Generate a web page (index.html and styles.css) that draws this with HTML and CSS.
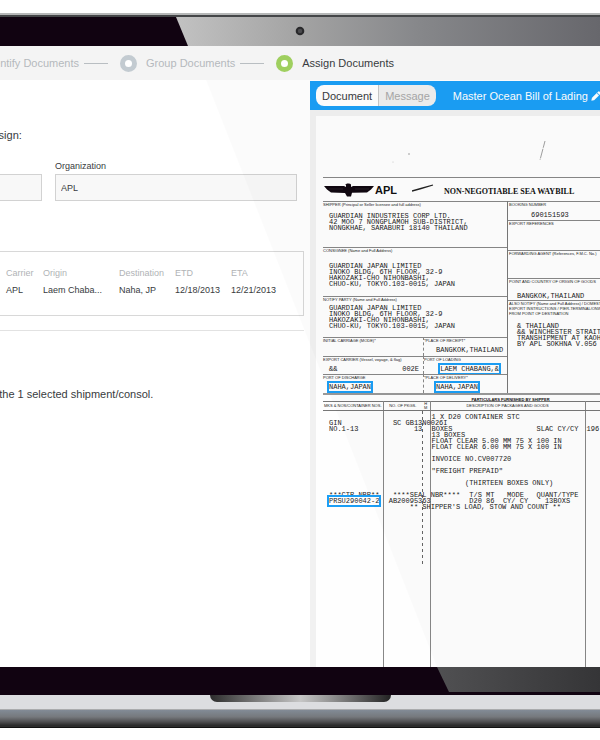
FILE: index.html
```html
<!DOCTYPE html>
<html lang="en">
<head>
<meta charset="utf-8">
<title>Assign Documents</title>
<link rel="stylesheet" href="styles.css">
</head>
<body>
<div class="laptop">
  <div class="bezel bezel-top">
    <svg class="camera" viewBox="0 0 10 10" aria-hidden="true"><circle cx="5" cy="5" r="4.3" fill="#29292b"/><circle cx="5" cy="5" r="2.2" fill="#4b4b4e"/></svg>
  </div>
  <main class="screen">
    <ol class="stepper">
      <li><span>Identify Documents</span></li>
      <li><i class="rule"></i><i class="ring"></i><span>Group Documents</span></li>
      <li class="current"><i class="rule"></i><i class="ring"></i><span>Assign Documents</span></li>
    </ol>
    <div class="workspace">
      <section class="assign">
        <p class="lead">assign:</p>
        <form class="filters">
          <div class="field"><input type="text" aria-label="Reference"></div>
          <div class="field"><label for="org">Organization</label><input id="org" type="text" value="APL"></div>
        </form>
        <div class="card">
          <table class="shipments">
            <colgroup><col class="c-carrier"><col class="c-origin"><col class="c-dest"><col class="c-etd"><col></colgroup>
            <thead><tr><th>Carrier</th><th>Origin</th><th>Destination</th><th>ETD</th><th>ETA</th></tr></thead>
            <tbody><tr><td>APL</td><td>Laem Chaba...</td><td>Naha, JP</td><td>12/18/2013</td><td>12/21/2013</td></tr></tbody>
          </table>
        </div>
        <hr>
        <p class="summary">to the 1 selected shipment/consol.</p>
      </section>
      <section class="viewer">
        <header class="viewer-bar">
          <div class="segmented"><button type="button" class="active">Document</button><button type="button">Message</button></div>
          <h1>Master Ocean Bill of Lading</h1>
          <button type="button" class="edit" aria-label="Edit"><svg viewBox="0 0 10 10" aria-hidden="true"><path d="M0.6 9.4 1.2 6.8 5.7 2.3 7.8 4.4 3.2 8.9ZM6.4 1.6 7.3 .7Q7.9.2 8.5.8L9.3 1.6Q9.8 2.2 9.3 2.8L8.4 3.7Z" fill="#fff" stroke="#fff" stroke-width=".4"/></svg></button>
        </header>
        <div class="viewer-body">
          <article class="scan">
            <div class="margin-top">
              <svg viewBox="0 0 284 61" aria-hidden="true"><path d="M229 25 224 44" stroke="#888" stroke-width=".8" stroke-dasharray="7 1 10 1"/><circle cx="93" cy="38" r=".8" fill="#999"/><circle cx="77" cy="46" r=".5" fill="#bbb"/></svg>
            </div>
            <header class="letterhead">
              <svg class="eagle" viewBox="0 0 52 14" aria-hidden="true"><path d="M1 3H21L23 4V2L22 2 24 .6Q27 0 28 1.5V4L30 3H51L48 6.5 44 9.6 29 9.8 28 13.5H24L22 10 8 9.6 4 6.5Z" fill="#110811"/><path d="M6 6H20M32 6H46" stroke="#3c343c" stroke-width=".5"/></svg>
              <strong>APL</strong>
              <svg class="dash" viewBox="0 0 22 8" aria-hidden="true"><path d="M0 7 9 4.5 21 1" stroke="#222" fill="none" stroke-width="1.3"/></svg>
              <h2>NON-NEGOTIABLE SEA WAYBILL</h2>
            </header>
            <div class="parties">
              <div class="left">
                <section class="box shipper"><h3>SHIPPER (Principal or Seller licensee and full address)</h3><pre>GUARDIAN INDUSTRIES CORP LTD.
42 MOO 7 NONGPLAMOH SUB-DISTRICT,
NONGKHAE, SARABURI 18140 THAILAND</pre></section>
                <section class="box consignee"><h3>CONSIGNEE (Name and Full Address)</h3><pre>GUARDIAN JAPAN LIMITED
INOKO BLDG, 6TH FLOOR, 32-9
HAKOZAKI-CHO NIHONBASHI,
CHUO-KU, TOKYO.103-0015, JAPAN</pre></section>
                <section class="box notify"><h3>NOTIFY PARTY (Name and Full Address)</h3><pre>GUARDIAN JAPAN LIMITED
INOKO BLDG, 6TH FLOOR, 32-9
HAKOZAKI-CHO NIHONBASHI,
CHUO-KU, TOKYO.103-0015, JAPAN</pre></section>
                <div class="pair"><section class="box"><h3>INITIAL CARRIAGE (MODE)*</h3></section><section class="box"><h3>*PLACE OF RECEIPT*</h3><pre>BANGKOK,THAILAND</pre></section></div>
                <div class="pair"><section class="box"><h3>EXPORT CARRIER (Vessel, voyage, &amp; flag)</h3><pre class="split"><span>&amp;&amp;</span><span>002E</span></pre></section><section class="box"><h3>PORT OF LOADING</h3><pre> <mark>LAEM CHABANG,&amp;</mark></pre></section></div>
                <div class="pair"><section class="box"><h3>PORT OF DISCHARGE</h3><pre><mark>NAHA,JAPAN</mark></pre></section><section class="box"><h3>*PLACE OF DELIVERY*</h3><pre><mark>NAHA,JAPAN</mark></pre></section></div>
              </div>
              <div class="right">
                <section class="box booking"><h3>BOOKING NUMBER</h3><pre>690151593</pre></section>
                <section class="box"><h3>EXPORT REFERENCES</h3></section>
                <section class="box"><h3>FORWARDING AGENT (References, F.M.C. No.)</h3></section>
                <section class="box origin"><h3>POINT AND COUNTRY OF ORIGIN OF GOODS</h3><pre>BANGKOK,THAILAND</pre></section>
                <section class="box also"><h3>ALSO NOTIFY (Name and Full Address) / DOMESTIC<br>EXPORT INSTRUCTIONS / PIER-TERMINAL/ONWARD<br>FROM POINT OF DESTINATION</h3><pre>&amp; THAILAND
&amp;&amp; WINCHESTER STRAIT
TRANSHIPMENT AT KAOHSIUNG
BY APL SOKHNA V.056</pre></section>
              </div>
            </div>
            <table class="particulars">
              <caption>PARTICULARS FURNISHED BY SHIPPER</caption>
              <colgroup><col class="p-marks"><col class="p-pkgs"><col class="p-hm"><col class="p-desc"><col></colgroup>
              <thead><tr><th>MKS &amp; NOS/CONTAINER NOS.</th><th>NO. OF PKGS.</th><th>H<br>M</th><th>DESCRIPTION OF PACKAGES AND GOODS</th><th></th></tr></thead>
              <tbody><tr>
                <td><pre class="inset">

GIN
NO.1-13










***CTR NBR**
<mark>PRSU290042-2</mark></pre></td>
                <td><pre>

  SC GB13N0026I
       13










  ****SEAL NBR****
 AB20095363
      ** SHIPPER'S LOAD, STOW AND COUNT **</pre></td>
                <td class="perforated"></td>
                <td><pre>
1 X D20 CONTAINER STC

BOXES                    SLAC CY/CY
13 BOXES
FLOAT CLEAR 5.00 MM 75 X 100 IN
FLOAT CLEAR 6.00 MM 75 X 100 IN

INVOICE NO.CV007720

"FREIGHT PREPAID"

        (THIRTEEN BOXES ONLY)

         T/S MT   MODE   QUANT/TYPE
         D20 86  CY/ CY    13BOXS</pre></td>
                <td><pre>


196</pre></td>
              </tr></tbody>
            </table>
          </article>
        </div>
      </section>
      <div class="glare"></div>
    </div>
  </main>
  <div class="bezel bezel-bottom"></div>
  <div class="base"><div class="notch"></div></div>
  <div class="underside"></div>
</div>
</body>
</html>
```
FILE: styles.css
```css
* { box-sizing: border-box; }
body {
  margin: 0;
  background: #fff;
  color: #383b40;
  font-family: "Liberation Sans", sans-serif;
  font-size: 11px;
  line-height: 16px;
}
h1, h2, h3, p, pre, ol { margin: 0; padding: 0; font-weight: normal; }
button, input { font: inherit; color: inherit; }
.laptop { padding-top: 13px; overflow: hidden; }

.bezel { position: relative; background: #110311; }
.bezel-top {
  height: 33px;
  border-top: 2px solid #b6b8b8;
  box-shadow: inset 0 2px #444648;
  display: flex;
  justify-content: center;
  align-items: center;
}
.bezel-top::before {
  content: "";
  position: absolute;
  inset: 2px 0 0;
  background: linear-gradient(90deg, #c2c2c2 176px, #a3a3a3 300px, #86878a 420px, #67676c 600px);
  clip-path: polygon(176px 0, 100% 0, 100% 100%, 188px 100%);
}
.camera { position: relative; width: 10px; height: 10px; }
.bezel-bottom { height: 28px; }
.bezel-bottom::before {
  content: "";
  position: absolute;
  inset: 0 0 3px;
  background: linear-gradient(90deg, #505052 437px, #353537 600px);
  clip-path: polygon(437px 0, 100% 0, 100% 100%, 449px 100%);
}
.base {
  height: 15px;
  background: #dcdde0;
  border-bottom: 1px solid #aaabad;
}
.notch {
  width: 181px;
  height: 7px;
  margin: 0 auto;
  border-radius: 0 0 7px 7px;
  background: linear-gradient(90deg, #2c2c2c, #999 35%, #c6c6c6 50%, #999 65%, #222);
}
.underside {
  height: 18px;
  background: linear-gradient(#828b96, #76797d 40%, #4e4e50 70%, #2c2c2c 90%);
  border-bottom: 1px solid #111;
}

.stepper {
  display: flex;
  align-items: center;
  justify-content: flex-end;
  height: 34px;
  padding-right: 206px;
  margin-left: -30px;
  background: #f4f4f4;
  color: #b4b9bd;
  list-style: none;
  white-space: nowrap;
}
.stepper li { display: flex; align-items: center; }
.stepper .current { color: #383b40; }
.rule { width: 24px; height: 1px; margin: 0 12px 0 5px; background: #b9bec2; }
.ring {
  width: 17px;
  height: 17px;
  margin-right: 9px;
  border: 5px solid #c3cbd1;
  border-radius: 50%;
  background: #fff;
}
.current .ring { border-color: #9fcf5f; }

.workspace {
  position: relative;
  display: grid;
  grid-template-columns: 31fr 29fr;
  height: 587px;
}
.assign { min-width: 0; margin-left: -10px; padding: 47px 6px 0 0; }
.lead, .summary { margin-left: -3px; white-space: nowrap; }
.filters { display: flex; align-items: flex-end; gap: 13px; padding: 15px 7px 0 0; font-size: 9px; }
.field { flex: 1; }
.field:first-child { flex: 0 0 52px; }
.field label { display: block; }
.field input {
  display: block;
  width: 100%;
  height: 27px;
  padding: 0 5px;
  border: 1px solid #d2d2d2;
  background: #f8f8f8;
}
.card {
  height: 65px;
  margin-top: 50px;
  padding: 13px 0 0 15px;
  border: 1px solid #d8d8d8;
  font-size: 9px;
}
.shipments { width: 100%; border-collapse: collapse; table-layout: fixed; line-height: 17px; white-space: nowrap; }
.shipments th { padding: 0; color: #b0b3b6; font-weight: normal; text-align: left; }
.shipments td { padding: 0; }
.c-carrier { width: 37px; }
.c-origin { width: 76px; }
.c-dest, .c-etd { width: 56px; }
hr { height: 1px; margin: 14px 0 0; border: 0; background: #e2e2e2; }
.summary { margin-top: 55px; }

.viewer { display: flex; flex-direction: column; min-width: 0; overflow: hidden; }
.viewer-bar {
  display: flex;
  align-items: center;
  flex: none;
  height: 29px;
  margin-top: 1px;
  padding-left: 6px;
  background: #1b9ff6;
  color: #fff;
  white-space: nowrap;
}
.viewer-bar h1 { margin-left: 17px; font-size: 11px; }
.segmented { display: flex; flex: none; overflow: hidden; border-radius: 8px; }
.segmented button { height: 21px; padding: 0 6px; border: 0; background: #efefef; color: #a8a8a8; }
.segmented .active { border-right: 1px solid #c8c8c8; background: #fff; color: #383b40; }
.edit { display: flex; margin-left: 3px; padding: 0; border: 0; background: none; }
.edit svg { width: 10px; height: 10px; }
.viewer-body { flex: 1; min-height: 0; padding: 6px 0 0 6px; overflow: hidden; background: #f1f1f1; }

.scan { width: 340px; height: 100%; padding-left: 7px; background: #fefefe; color: #222; }
.margin-top { height: 61px; margin-left: -7px; }
.margin-top svg { width: 284px; height: 61px; }
.letterhead { display: flex; align-items: center; height: 24px; border-top: 1px solid #888; color: #111; white-space: nowrap; }
.eagle { width: 52px; height: 14px; }
.letterhead strong { font: bold 11px/14px "Liberation Sans", sans-serif; }
.dash { width: 22px; height: 8px; margin: 0 10px 4px 15px; }
.letterhead h2 { padding-top: 5px; font: bold 8px/10px "Liberation Serif", serif; }
.scan pre { font: 7px/6px "Liberation Mono", monospace; padding-left: 6px; }
.scan h3, .particulars th, .particulars caption { font: 4px/5px "Liberation Sans", sans-serif; white-space: nowrap; }
.parties { display: grid; grid-template-columns: 184px 1fr; }
.left { display: grid; grid-template-rows: 46px 49px 41px 19px 18px 19px; }
.right { display: grid; grid-template-rows: 19px 30px 28px 22px 93px; border-left: 1px solid #777; }
.box { min-width: 0; border-top: 1px solid #888; }
.right .box { padding-left: 1px; }
.shipper pre { padding-top: 6px; }
.consignee pre { padding-top: 10px; }
.notify pre { padding-top: 3px; }
.pair { display: grid; grid-template-columns: 100px 84px; }
.pair .box + .box { border-left: 1px dashed #888; }
.pair pre { padding-top: 4px; }
.pair .box + .box pre { padding-left: 12px; }
.pair .split { display: flex; justify-content: space-between; padding-right: 4px; }
.booking pre { padding: 5px 0 0 22px; }
.origin pre { padding: 9px 0 0 8px; }
.also pre { padding: 7px 0 0 8px; }
mark { background: none; color: inherit; outline: 2px solid #1b9ff6; }

.particulars { width: 100%; border-collapse: collapse; table-layout: fixed; border-top: 1px solid #777; }
.particulars caption { height: 8px; padding: 2px 0 0 42px; border-top: 2px solid #999; font-weight: bold; color: #111; }
.particulars th { height: 9px; padding: 0; border-bottom: 1px solid #777; line-height: 4px; overflow: hidden; }
.particulars th, .particulars td { border-right: 1px solid #888; }
.particulars td { height: 257px; padding: 3px 0 0; vertical-align: top; }
.particulars th:nth-child(2), .particulars td:nth-child(2) { border-right: 0; }
.particulars pre { padding-left: 1px; }
.particulars .inset { padding-left: 6px; }
.particulars .perforated { background: repeating-linear-gradient(#666 0 3px, transparent 3px 6px) no-repeat 0 0 / 1px 153px; }
.p-marks { width: 60px; }
.p-pkgs { width: 39px; }
.p-hm { width: 8px; }
.p-desc { width: 155px; }

.glare {
  position: absolute;
  inset: 0;
  background: rgba(0, 0, 0, 0.015);
  clip-path: polygon(206px 0, 100% 0, 100% 100%, 437px 100%);
  pointer-events: none;
}
```
